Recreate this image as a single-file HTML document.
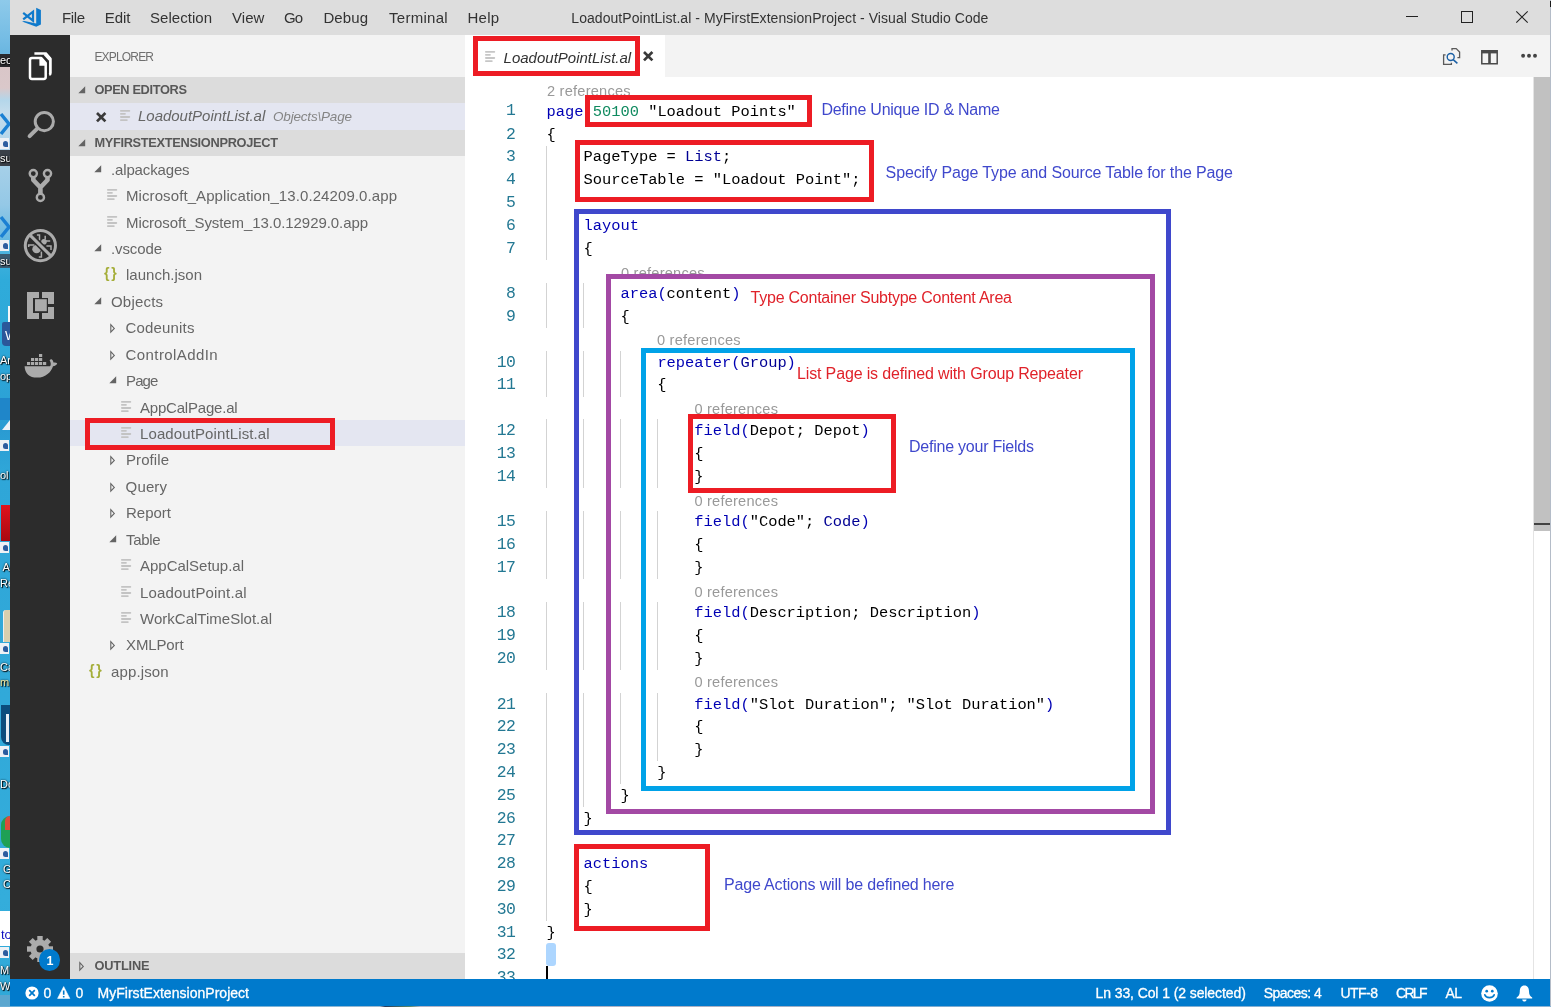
<!DOCTYPE html>
<html lang="en"><head><meta charset="utf-8"><title>LoadoutPointList.al - MyFirstExtensionProject - Visual Studio Code</title>
<style>
*{margin:0;padding:0;box-sizing:border-box}
html,body{width:1551px;height:1007px;overflow:hidden;background:#fff}
body{position:relative;will-change:transform;font-family:"Liberation Sans",sans-serif}
.t{position:absolute;white-space:pre;line-height:20px;height:20px}
.r{position:absolute}
.c{position:absolute;white-space:pre;line-height:20px;height:20px;font-family:"Liberation Mono",monospace;font-size:15.4px;letter-spacing:-0.005px;color:#000;left:546.60px}
.k{color:#0000b4}.v{color:#000094}.n{color:#0f8a5f}
.ln{position:absolute;white-space:pre;line-height:20px;height:20px;font-family:"Liberation Mono",monospace;font-size:16.4px;letter-spacing:-0.605px;color:#237893;text-align:right;width:60px;left:455.30px}
.g{position:absolute;width:1px;background:#d3d3d3}
svg{position:absolute;overflow:visible}
</style></head>
<body>
<div class="r" style="left:0px;top:0px;width:1551px;height:1007px;background:#2d9fd3;"></div>
<div class="r" style="left:0;top:0;width:10px;height:1007px;overflow:hidden;background:linear-gradient(180deg,#8ecaea 0,#74bce4 40px,#6ab6e0 53px,#d9c6c8 66px,#dac8ca 88px,#b4d6ea 100px,#c4dcec 112px,#b0d4ea 150px,#a4cfe8 170px,#94c8e6 205px,#6cbbe2 235px,#3cafdc 262px,#2fabda 280px,#2ea9d9 330px,#2ca2d6 400px,#2a9bd2 430px,#2fa6d8 470px,#31a9d9 700px,#34addb 900px,#30a8d8 1007px)"><div class="r" style="left:0px;top:54px;width:10px;height:13px;background:#2a2a2e;"></div><div class="t" style="left:0px;top:50px;font-size:11px;color:#fff;text-shadow:0 0 2px #000,1px 1px 1px #000;">ec</div><svg style="left:0;top:112px" width="10" height="24" viewBox="0 0 10 24"><path d="M1 2 L9 12 L1 22" fill="none" stroke="#1b80d3" stroke-width="3.4"/></svg><svg style="left:0;top:215px" width="10" height="24" viewBox="0 0 10 24"><path d="M1 2 L9 12 L1 22" fill="none" stroke="#1b80d3" stroke-width="3.4"/></svg><div class="r" style="left:0;top:138px;width:9px;height:11px;background:#eef1f5"></div><div class="r" style="left:3px;top:141px;width:5px;height:6px;background:#2c5d9f;border-radius:3px 3px 0 3px"></div><div class="r" style="left:0px;top:150px;width:10px;height:16px;background:#3a4048;"></div><div class="t" style="left:0px;top:148px;font-size:11px;color:#fff;text-shadow:0 0 2px #000,1px 1px 1px #000;">su</div><div class="r" style="left:0;top:240px;width:9px;height:11px;background:#eef1f5"></div><div class="r" style="left:3px;top:243px;width:5px;height:6px;background:#2c5d9f;border-radius:3px 3px 0 3px"></div><div class="r" style="left:0px;top:254px;width:10px;height:14px;background:#3a5a70;"></div><div class="t" style="left:0px;top:251px;font-size:11px;color:#fff;text-shadow:0 0 2px #000,1px 1px 1px #000;">su</div><div class="r" style="left:8px;top:306px;width:2px;height:24px;background:#f4f6f8;"></div><div class="r" style="left:2px;top:322px;width:8px;height:24px;background:#2b579a;border-radius:2px 0 0 4px"></div><div class="t" style="left:5px;top:326px;font-size:13px;color:#fff;">W</div><div class="t" style="left:0px;top:350px;font-size:11px;color:#fff;text-shadow:0 0 2px #000,1px 1px 1px #000;">An</div><div class="t" style="left:0px;top:366px;font-size:11px;color:#fff;text-shadow:0 0 2px #000,1px 1px 1px #000;">op</div><div class="r" style="left:0px;top:398px;width:10px;height:22px;background:#1f86c9;"></div><svg style="left:2px;top:420px" width="8" height="10" viewBox="0 0 8 10"><path d="M8 0 V10 H0 Z" fill="#eef3f8"/></svg><div class="r" style="left:0;top:440px;width:9px;height:11px;background:#eef1f5"></div><div class="r" style="left:3px;top:443px;width:5px;height:6px;background:#2c5d9f;border-radius:3px 3px 0 3px"></div><div class="t" style="left:0px;top:465px;font-size:11px;color:#fff;text-shadow:0 0 2px #000,1px 1px 1px #000;">ol</div><div class="r" style="left:1px;top:505px;width:9px;height:36px;background:linear-gradient(180deg,#e0121c,#a80810);"></div><div class="r" style="left:0;top:542px;width:9px;height:11px;background:#eef1f5"></div><div class="r" style="left:3px;top:545px;width:5px;height:6px;background:#2c5d9f;border-radius:3px 3px 0 3px"></div><div class="t" style="left:0px;top:557px;font-size:11px;color:#fff;text-shadow:0 0 2px #000,1px 1px 1px #000;"> A</div><div class="t" style="left:0px;top:573px;font-size:11px;color:#fff;text-shadow:0 0 2px #000,1px 1px 1px #000;">Re</div><div class="r" style="left:3px;top:610px;width:7px;height:32px;background:#d9cfae;border-radius:3px 0 0 0;border-left:1px solid #eee"></div><div class="r" style="left:0;top:643px;width:9px;height:11px;background:#eef1f5"></div><div class="r" style="left:3px;top:646px;width:5px;height:6px;background:#2c5d9f;border-radius:3px 3px 0 3px"></div><div class="t" style="left:0px;top:657px;font-size:11px;color:#fff;text-shadow:0 0 2px #000,1px 1px 1px #000;">Ca</div><div class="t" style="left:0px;top:672px;font-size:11px;color:#f4e9a0;text-shadow:0 0 2px #000,1px 1px 1px #000;">m</div><div class="r" style="left:1px;top:705px;width:9px;height:40px;background:#0b4c7c;border-radius:0 0 0 8px"></div><div class="r" style="left:6px;top:714px;width:3px;height:28px;background:#e8eef4;"></div><div class="r" style="left:0;top:746px;width:9px;height:11px;background:#eef1f5"></div><div class="r" style="left:3px;top:749px;width:5px;height:6px;background:#2c5d9f;border-radius:3px 3px 0 3px"></div><div class="t" style="left:0px;top:774px;font-size:11px;color:#fff;text-shadow:0 0 2px #000,1px 1px 1px #000;">Do</div><div class="r" style="left:1px;top:816px;width:9px;height:32px;background:#1fa055;border-radius:14px 0 0 14px"></div><div class="r" style="left:5px;top:816px;width:5px;height:14px;background:#dc4a3c;border-radius:8px 0 0 0"></div><div class="r" style="left:0;top:848px;width:9px;height:11px;background:#eef1f5"></div><div class="r" style="left:3px;top:851px;width:5px;height:6px;background:#2c5d9f;border-radius:3px 3px 0 3px"></div><div class="t" style="left:0px;top:859px;font-size:11px;color:#fff;text-shadow:0 0 2px #000,1px 1px 1px #000;"> G</div><div class="t" style="left:0px;top:874px;font-size:11px;color:#fff;text-shadow:0 0 2px #000,1px 1px 1px #000;"> C</div><div class="r" style="left:0px;top:911px;width:10px;height:35px;background:#ffffff;"></div><div class="t" style="left:1px;top:925px;font-size:13px;color:#1010c0;">to</div><div class="r" style="left:0;top:947px;width:9px;height:11px;background:#eef1f5"></div><div class="r" style="left:3px;top:950px;width:5px;height:6px;background:#2c5d9f;border-radius:3px 3px 0 3px"></div><div class="t" style="left:0px;top:960px;font-size:11px;color:#fff;text-shadow:0 0 2px #000,1px 1px 1px #000;">Mi</div><div class="t" style="left:0px;top:976px;font-size:11px;color:#fff;text-shadow:0 0 2px #000,1px 1px 1px #000;">W</div><div class="r" style="left:0px;top:995px;width:10px;height:12px;background:#5aa6cf;"></div></div>
<div class="r" style="left:1550px;top:0px;width:1px;height:1007px;background:#b4bcc8;"></div>
<div class="r" style="left:1550px;top:1px;width:1px;height:6px;background:#1a1a1a;"></div>
<div class="r" style="left:0px;top:1006px;width:1551px;height:1px;background:linear-gradient(90deg,#6aaed6 0,#7db4d8 300px,#9db9d0 380px,#2a3a5a 385px,#5a8a6a 410px,#b0b4c8 420px,#a8b0c4 760px,#7aaad0 900px,#8ab4d6 1551px);"></div>
<div class="r" style="left:10px;top:0px;width:1540px;height:1006px;background:#ffffff;"></div>
<div class="r" style="left:10px;top:0px;width:1540px;height:35px;background:#dddddd;"></div>
<div class="t" style="left:62.00px;top:8.00px;font-size:15px;color:#333333;letter-spacing:-0.388px;">File</div>
<div class="t" style="left:104.70px;top:8.00px;font-size:15px;color:#333333;letter-spacing:-0.048px;">Edit</div>
<div class="t" style="left:150.00px;top:8.00px;font-size:15px;color:#333333;letter-spacing:0.036px;">Selection</div>
<div class="t" style="left:232.00px;top:8.00px;font-size:15px;color:#333333;letter-spacing:0.040px;">View</div>
<div class="t" style="left:284.00px;top:8.00px;font-size:15px;color:#333333;letter-spacing:-1.010px;">Go</div>
<div class="t" style="left:323.40px;top:8.00px;font-size:15px;color:#333333;letter-spacing:0.099px;">Debug</div>
<div class="t" style="left:389.00px;top:8.00px;font-size:15px;color:#333333;letter-spacing:0.274px;">Terminal</div>
<div class="t" style="left:467.60px;top:8.00px;font-size:15px;color:#333333;letter-spacing:0.182px;">Help</div>
<div class="t" style="left:571.30px;top:8.00px;font-size:14px;color:#333333;letter-spacing:0.052px;">LoadoutPointList.al - MyFirstExtensionProject - Visual Studio Code</div>
<svg style="left:22px;top:7px" width="20" height="21" viewBox="0 0 20 21"><path fill="#0f7acc" d="M14.2 0.8 L18.9 3 V17.6 L14.2 19.8 L0 14.6 L2.4 13.9 L14.2 16.6 Z"/><path fill="none" stroke="#0f7acc" stroke-width="2.2" d="M1.2 5.8 L11 13.7 V4.7 L1.2 12.4"/></svg>
<div class="r" style="left:1406px;top:16px;width:12px;height:1px;background:#222;"></div>
<div class="r" style="left:1461px;top:11px;width:12px;height:12px;border:1px solid #222"></div>
<svg style="left:1516px;top:11px" width="12" height="12" viewBox="0 0 12 12"><path d="M0.3 0.3 L11.7 11.7 M11.7 0.3 L0.3 11.7" stroke="#222" stroke-width="1.1" fill="none"/></svg>
<div class="r" style="left:10px;top:35px;width:60px;height:944px;background:#2c2c2c;"></div>
<svg style="left:15px;top:44px" width="52" height="46" viewBox="0 0 52 46"><g fill="none" stroke="#fff" stroke-linejoin="round"><path d="M19.4 9.5 H30.6 L35.4 15 V29 Q35.4 30.4 34.2 30.8" stroke-width="2.7"/><path d="M30 9.8 L35 15.4" stroke-width="3.6"/><path d="M15 16 Q15 14.05 17 14.05 H26.3 L30.7 19 V33 Q30.7 34.9 28.7 34.9 H17 Q15 34.9 15 33 Z" stroke-width="2.5"/></g><path d="M24.4 14 H26.6 L30.8 19 V21.8 H24.4 Z" fill="#fff"/></svg>
<svg style="left:24px;top:108px" width="34" height="34" viewBox="0 0 34 34"><circle cx="20.3" cy="13.6" r="9.1" fill="none" stroke="#ababab" stroke-width="3"/><path d="M13.2 20.6 L5.6 28.2" stroke="#ababab" stroke-width="4" stroke-linecap="round"/></svg>
<svg style="left:26px;top:166px" width="30" height="38" viewBox="0 0 30 38"><g fill="none" stroke="#ababab"><circle cx="7.3" cy="7.6" r="3.6" stroke-width="2.4"/><circle cx="21.5" cy="7.6" r="3.6" stroke-width="2.4"/><circle cx="14.4" cy="31.4" r="3.6" stroke-width="2.4"/><path d="M7.3 11.5 V14 L14.4 21.5 V27.5 M21.5 11.5 V14 L14.4 21.5" stroke-width="4.6" stroke-linejoin="round"/></g></svg>
<svg style="left:15px;top:222px" width="52" height="46" viewBox="0 0 52 46"><g fill="none" stroke="#ababab" stroke-width="1.5"><path d="M21.9 13 H24.5 V18.6 M30.2 13.7 V17.6 M31 18.9 H35.2 M31.4 24.1 H36 V27.9 M19.4 23.1 H13.7 V24.9 M26.4 29.6 V35 H23.8"/></g><ellipse cx="21.6" cy="27.2" rx="4.3" ry="4.1" fill="#ababab"/><circle cx="29" cy="19.8" r="2.8" fill="#ababab"/><path d="M24 24.6 L27.4 21.4" stroke="#ababab" stroke-width="3"/><path d="M15 13.1 L35.8 33.9" stroke="#2c2c2c" stroke-width="6.2"/><path d="M15 13.1 L35.8 33.9" stroke="#ababab" stroke-width="3"/><circle cx="25.37" cy="23.54" r="15.1" fill="none" stroke="#ababab" stroke-width="3"/></svg>
<svg style="left:27px;top:292px" width="27" height="27" viewBox="0 0 27 27"><path fill="#ababab" d="M0 0 H12 V6 H6 V21 H12 V27 H0 Z M15 0 H27 V12 H21 V6 H15 Z M21 15 H27 V27 H15 V21 H21 Z"/><rect x="8" y="7.2" width="11.8" height="12" fill="#ababab"/></svg>
<svg style="left:24px;top:353px" width="34" height="26" viewBox="0 0 34 26"><g fill="#ababab"><path d="M0.6 13.2 H26 C27.2 12 27 9.5 25.6 7.2 C26.2 6.3 27 6 27.6 6.2 C28.8 7.2 29.4 8.4 29.4 9.6 C30.8 9.2 32.2 9.4 33.2 10.2 C32.8 12 31 13 29 13.2 C27 19 22 24.6 13 24.6 C5.5 24.6 0.8 20.5 0.6 13.2 Z"/><rect x="3" y="9" width="3.2" height="3"/><rect x="7" y="9" width="3.2" height="3"/><rect x="11" y="9" width="3.2" height="3"/><rect x="15" y="9" width="3.2" height="3"/><rect x="19" y="9" width="3.2" height="3"/><rect x="7" y="5" width="3.2" height="3"/><rect x="11" y="5" width="3.2" height="3"/><rect x="15" y="5" width="3.2" height="3"/><rect x="15" y="1" width="3.2" height="3"/></g></svg>
<svg style="left:26.4px;top:935.2px" width="28" height="28" viewBox="0 0 28 28"><g transform="translate(14 14)"><circle r="6.6" fill="none" stroke="#ababab" stroke-width="6"/><g fill="#ababab"><rect x="-2.7" y="-13" width="5.4" height="5" transform="rotate(0)"/><rect x="-2.7" y="-13" width="5.4" height="5" transform="rotate(45)"/><rect x="-2.7" y="-13" width="5.4" height="5" transform="rotate(90)"/><rect x="-2.7" y="-13" width="5.4" height="5" transform="rotate(135)"/><rect x="-2.7" y="-13" width="5.4" height="5" transform="rotate(180)"/><rect x="-2.7" y="-13" width="5.4" height="5" transform="rotate(225)"/><rect x="-2.7" y="-13" width="5.4" height="5" transform="rotate(270)"/><rect x="-2.7" y="-13" width="5.4" height="5" transform="rotate(315)"/></g></g></svg>
<div class="r" style="left:38.8px;top:949.4px;width:21.2px;height:21.2px;border-radius:50%;background:#007acc"></div>
<div class="t" style="left:46.40px;top:951.00px;font-size:12.5px;color:#fff;font-weight:bold;">1</div>
<div class="r" style="left:70px;top:35px;width:395px;height:944px;background:#f3f3f3;"></div>
<div class="t" style="left:94.40px;top:47.00px;font-size:12px;color:#6f6f6f;letter-spacing:-0.822px;">EXPLORER</div>
<div class="r" style="left:70px;top:77px;width:395px;height:26px;background:#dcdcdc;"></div>
<svg style="left:77.8px;top:85.8px" width="8" height="8" viewBox="0 0 8 8"><path d="M7.2 0.3 V7.2 H0.3 Z" fill="#646464"/></svg>
<div class="t" style="left:94.40px;top:80.00px;font-size:12.8px;color:#585858;letter-spacing:-0.354px;font-weight:bold;">OPEN EDITORS</div>
<div class="r" style="left:70px;top:103px;width:395px;height:27px;background:#e4e6f1;"></div>
<svg style="left:95.5px;top:111.8px" width="10.4" height="10.4" viewBox="-5.2 -5.2 10.4 10.4"><path d="M-4.2 -4.2 L4.2 4.2 M4.2 -4.2 L-4.2 4.2" stroke="#3a3a3a" stroke-width="2.7" fill="none"/></svg>
<svg style="left:119.6px;top:110.2px" width="11" height="12" viewBox="0 0 11 12"><rect x="0" y="0.00" width="10.2" height="1.8" rx="0.8" fill="#c3c3c3"/><rect x="0" y="3.05" width="5.8" height="1.8" rx="0.8" fill="#c3c3c3"/><rect x="0" y="6.10" width="10.2" height="1.8" rx="0.8" fill="#c3c3c3"/><rect x="0" y="9.15" width="7.7" height="1.8" rx="0.8" fill="#c3c3c3"/></svg>
<div class="t" style="left:138.00px;top:106.40px;font-size:15px;color:#666666;letter-spacing:-0.019px;font-style:italic;">LoadoutPointList.al</div>
<div class="t" style="left:273.00px;top:107.40px;font-size:13.5px;color:#858585;letter-spacing:-0.185px;font-style:italic;">Objects\Page</div>
<div class="r" style="left:70px;top:130px;width:395px;height:26px;background:#dcdcdc;"></div>
<svg style="left:77.8px;top:139.0px" width="8" height="8" viewBox="0 0 8 8"><path d="M7.2 0.3 V7.2 H0.3 Z" fill="#646464"/></svg>
<div class="t" style="left:94.40px;top:133.00px;font-size:12.8px;color:#585858;letter-spacing:-0.318px;font-weight:bold;">MYFIRSTEXTENSIONPROJECT</div>
<div class="r" style="left:70px;top:420px;width:395px;height:26px;background:#e4e6f1;"></div>
<svg style="left:94.1px;top:165.0px" width="8" height="8" viewBox="0 0 8 8"><path d="M7.2 0.3 V7.2 H0.3 Z" fill="#646464"/></svg>
<div class="t" style="left:111.00px;top:159.80px;font-size:15px;color:#666666;letter-spacing:-0.145px;">.alpackages</div>
<svg style="left:107.2px;top:189.4px" width="11" height="12" viewBox="0 0 11 12"><rect x="0" y="0.00" width="10.2" height="1.8" rx="0.8" fill="#c3c3c3"/><rect x="0" y="3.05" width="5.8" height="1.8" rx="0.8" fill="#c3c3c3"/><rect x="0" y="6.10" width="10.2" height="1.8" rx="0.8" fill="#c3c3c3"/><rect x="0" y="9.15" width="7.7" height="1.8" rx="0.8" fill="#c3c3c3"/></svg>
<div class="t" style="left:126.00px;top:186.22px;font-size:15px;color:#666666;letter-spacing:0.089px;">Microsoft_Application_13.0.24209.0.app</div>
<svg style="left:107.2px;top:215.8px" width="11" height="12" viewBox="0 0 11 12"><rect x="0" y="0.00" width="10.2" height="1.8" rx="0.8" fill="#c3c3c3"/><rect x="0" y="3.05" width="5.8" height="1.8" rx="0.8" fill="#c3c3c3"/><rect x="0" y="6.10" width="10.2" height="1.8" rx="0.8" fill="#c3c3c3"/><rect x="0" y="9.15" width="7.7" height="1.8" rx="0.8" fill="#c3c3c3"/></svg>
<div class="t" style="left:126.00px;top:212.64px;font-size:15px;color:#666666;letter-spacing:-0.072px;">Microsoft_System_13.0.12929.0.app</div>
<svg style="left:94.1px;top:244.3px" width="8" height="8" viewBox="0 0 8 8"><path d="M7.2 0.3 V7.2 H0.3 Z" fill="#646464"/></svg>
<div class="t" style="left:111.00px;top:239.06px;font-size:15px;color:#666666;letter-spacing:-0.115px;">.vscode</div>
<div class="t" style="left:104.10px;top:263.28px;font-size:14.2px;color:#a5ae3a;letter-spacing:1.552px;font-weight:bold;">{}</div>
<div class="t" style="left:126.00px;top:265.48px;font-size:15px;color:#666666;letter-spacing:0.012px;">launch.json</div>
<svg style="left:94.1px;top:297.1px" width="8" height="8" viewBox="0 0 8 8"><path d="M7.2 0.3 V7.2 H0.3 Z" fill="#646464"/></svg>
<div class="t" style="left:111.00px;top:291.90px;font-size:15px;color:#666666;letter-spacing:0.192px;">Objects</div>
<svg style="left:109.8px;top:323.1px" width="7" height="11" viewBox="0 0 7 11"><path d="M0.8 1.7 L4.3 5.4 L0.8 9.1 Z" fill="none" stroke="#646464" stroke-width="1.1" stroke-linejoin="miter"/></svg>
<div class="t" style="left:125.60px;top:318.32px;font-size:15px;color:#666666;letter-spacing:0.157px;">Codeunits</div>
<svg style="left:109.8px;top:349.5px" width="7" height="11" viewBox="0 0 7 11"><path d="M0.8 1.7 L4.3 5.4 L0.8 9.1 Z" fill="none" stroke="#646464" stroke-width="1.1" stroke-linejoin="miter"/></svg>
<div class="t" style="left:125.60px;top:344.74px;font-size:15px;color:#666666;letter-spacing:0.404px;">ControlAddIn</div>
<svg style="left:109.1px;top:376.4px" width="8" height="8" viewBox="0 0 8 8"><path d="M7.2 0.3 V7.2 H0.3 Z" fill="#646464"/></svg>
<div class="t" style="left:126.00px;top:371.16px;font-size:15px;color:#666666;letter-spacing:-0.875px;">Page</div>
<svg style="left:121.2px;top:400.8px" width="11" height="12" viewBox="0 0 11 12"><rect x="0" y="0.00" width="10.2" height="1.8" rx="0.8" fill="#c3c3c3"/><rect x="0" y="3.05" width="5.8" height="1.8" rx="0.8" fill="#c3c3c3"/><rect x="0" y="6.10" width="10.2" height="1.8" rx="0.8" fill="#c3c3c3"/><rect x="0" y="9.15" width="7.7" height="1.8" rx="0.8" fill="#c3c3c3"/></svg>
<div class="t" style="left:140.00px;top:397.58px;font-size:15px;color:#666666;letter-spacing:-0.205px;">AppCalPage.al</div>
<svg style="left:121.2px;top:427.2px" width="11" height="12" viewBox="0 0 11 12"><rect x="0" y="0.00" width="10.2" height="1.8" rx="0.8" fill="#c3c3c3"/><rect x="0" y="3.05" width="5.8" height="1.8" rx="0.8" fill="#c3c3c3"/><rect x="0" y="6.10" width="10.2" height="1.8" rx="0.8" fill="#c3c3c3"/><rect x="0" y="9.15" width="7.7" height="1.8" rx="0.8" fill="#c3c3c3"/></svg>
<div class="t" style="left:140.00px;top:424.00px;font-size:15px;color:#666666;letter-spacing:0.112px;">LoadoutPointList.al</div>
<svg style="left:109.8px;top:455.2px" width="7" height="11" viewBox="0 0 7 11"><path d="M0.8 1.7 L4.3 5.4 L0.8 9.1 Z" fill="none" stroke="#646464" stroke-width="1.1" stroke-linejoin="miter"/></svg>
<div class="t" style="left:126.00px;top:450.42px;font-size:15px;color:#666666;letter-spacing:0.079px;">Profile</div>
<svg style="left:109.8px;top:481.6px" width="7" height="11" viewBox="0 0 7 11"><path d="M0.8 1.7 L4.3 5.4 L0.8 9.1 Z" fill="none" stroke="#646464" stroke-width="1.1" stroke-linejoin="miter"/></svg>
<div class="t" style="left:125.60px;top:476.84px;font-size:15px;color:#666666;letter-spacing:0.139px;">Query</div>
<svg style="left:109.8px;top:508.1px" width="7" height="11" viewBox="0 0 7 11"><path d="M0.8 1.7 L4.3 5.4 L0.8 9.1 Z" fill="none" stroke="#646464" stroke-width="1.1" stroke-linejoin="miter"/></svg>
<div class="t" style="left:126.00px;top:503.26px;font-size:15px;color:#666666;">Report</div>
<svg style="left:109.1px;top:534.9px" width="8" height="8" viewBox="0 0 8 8"><path d="M7.2 0.3 V7.2 H0.3 Z" fill="#646464"/></svg>
<div class="t" style="left:126.00px;top:529.68px;font-size:15px;color:#666666;letter-spacing:-0.316px;">Table</div>
<svg style="left:121.2px;top:559.3px" width="11" height="12" viewBox="0 0 11 12"><rect x="0" y="0.00" width="10.2" height="1.8" rx="0.8" fill="#c3c3c3"/><rect x="0" y="3.05" width="5.8" height="1.8" rx="0.8" fill="#c3c3c3"/><rect x="0" y="6.10" width="10.2" height="1.8" rx="0.8" fill="#c3c3c3"/><rect x="0" y="9.15" width="7.7" height="1.8" rx="0.8" fill="#c3c3c3"/></svg>
<div class="t" style="left:140.00px;top:556.10px;font-size:15px;color:#666666;letter-spacing:-0.018px;">AppCalSetup.al</div>
<svg style="left:121.2px;top:585.7px" width="11" height="12" viewBox="0 0 11 12"><rect x="0" y="0.00" width="10.2" height="1.8" rx="0.8" fill="#c3c3c3"/><rect x="0" y="3.05" width="5.8" height="1.8" rx="0.8" fill="#c3c3c3"/><rect x="0" y="6.10" width="10.2" height="1.8" rx="0.8" fill="#c3c3c3"/><rect x="0" y="9.15" width="7.7" height="1.8" rx="0.8" fill="#c3c3c3"/></svg>
<div class="t" style="left:140.00px;top:582.52px;font-size:15px;color:#666666;letter-spacing:0.168px;">LoadoutPoint.al</div>
<svg style="left:121.2px;top:612.1px" width="11" height="12" viewBox="0 0 11 12"><rect x="0" y="0.00" width="10.2" height="1.8" rx="0.8" fill="#c3c3c3"/><rect x="0" y="3.05" width="5.8" height="1.8" rx="0.8" fill="#c3c3c3"/><rect x="0" y="6.10" width="10.2" height="1.8" rx="0.8" fill="#c3c3c3"/><rect x="0" y="9.15" width="7.7" height="1.8" rx="0.8" fill="#c3c3c3"/></svg>
<div class="t" style="left:140.00px;top:608.94px;font-size:15px;color:#666666;letter-spacing:0.018px;">WorkCalTimeSlot.al</div>
<svg style="left:109.8px;top:640.2px" width="7" height="11" viewBox="0 0 7 11"><path d="M0.8 1.7 L4.3 5.4 L0.8 9.1 Z" fill="none" stroke="#646464" stroke-width="1.1" stroke-linejoin="miter"/></svg>
<div class="t" style="left:126.00px;top:635.36px;font-size:15px;color:#666666;letter-spacing:-0.125px;">XMLPort</div>
<div class="t" style="left:89.10px;top:659.58px;font-size:14.2px;color:#a5ae3a;letter-spacing:1.552px;font-weight:bold;">{}</div>
<div class="t" style="left:111.00px;top:661.78px;font-size:15px;color:#666666;letter-spacing:0.126px;">app.json</div>
<div class="r" style="left:70px;top:953px;width:395px;height:26px;background:#dcdcdc;"></div>
<svg style="left:79.0px;top:961.2px" width="7" height="11" viewBox="0 0 7 11"><path d="M0.8 1.7 L4.3 5.4 L0.8 9.1 Z" fill="none" stroke="#646464" stroke-width="1.1" stroke-linejoin="miter"/></svg>
<div class="t" style="left:94.40px;top:956.00px;font-size:12.8px;color:#585858;letter-spacing:-0.163px;font-weight:bold;">OUTLINE</div>
<div class="r" style="left:85px;top:418px;width:250px;height:32px;border:5px solid #ed1c24;box-sizing:border-box"></div>
<div class="r" style="left:465px;top:35px;width:1085px;height:42px;background:#f3f3f3;"></div>
<div class="r" style="left:465px;top:35px;width:200px;height:42px;background:#ffffff;"></div>
<svg style="left:485.0px;top:51.0px" width="11" height="12" viewBox="0 0 11 12"><rect x="0" y="0.00" width="10.2" height="1.8" rx="0.8" fill="#c6c6c6"/><rect x="0" y="3.05" width="5.8" height="1.8" rx="0.8" fill="#c6c6c6"/><rect x="0" y="6.10" width="10.2" height="1.8" rx="0.8" fill="#c6c6c6"/><rect x="0" y="9.15" width="7.7" height="1.8" rx="0.8" fill="#c6c6c6"/></svg>
<div class="t" style="left:503.60px;top:48.00px;font-size:15px;color:#333333;font-style:italic;">LoadoutPointList.al</div>
<svg style="left:643.4px;top:51.4px" width="10.4" height="10.4" viewBox="-5.2 -5.2 10.4 10.4"><path d="M-4.2 -4.2 L4.2 4.2 M4.2 -4.2 L-4.2 4.2" stroke="#3a3a3a" stroke-width="2.7" fill="none"/></svg>
<svg style="left:1442px;top:47px" width="20" height="19" viewBox="0 0 20 19"><g fill="none" stroke-width="1.3"><path d="M10 3.4 V1.6 H14.2 L17.6 5 V10.6 H15.4" stroke="#5a5a5a"/><path d="M3.6 7.8 H1.6 V17.4 H9.4 V15.8" stroke="#5a5a5a"/><circle cx="8.7" cy="10" r="3.5" stroke="#1a5fa4" stroke-width="1.4"/><path d="M11.2 12.6 L15.4 16.4" stroke="#1a5fa4" stroke-width="1.5"/></g></svg>
<svg style="left:1481px;top:49.8px" width="18" height="16" viewBox="0 0 18 16"><path d="M0.8 0.8 H16.2 V13.8 H0.8 Z" fill="none" stroke="#4a4a4a" stroke-width="1.5"/><rect x="0.8" y="0.8" width="15.4" height="2.6" fill="#4a4a4a"/><rect x="7.2" y="1" width="2.6" height="12.8" fill="#4a4a4a"/></svg>
<svg style="left:1519px;top:52px" width="20" height="8" viewBox="0 0 20 8"><circle cx="4.1" cy="3.8" r="1.95" fill="#424242"/><circle cx="10" cy="3.8" r="1.95" fill="#424242"/><circle cx="16" cy="3.8" r="1.95" fill="#424242"/></svg>
<div class="r" style="left:465px;top:77px;width:1068.5px;height:902px;overflow:hidden;background:#fff">
<div class="t" style="left:82.00px;top:4.00px;font-size:14.6px;color:#999999;letter-spacing:0.222px;">2 references</div>
<div class="ln" style="left:-9.70px;top:23.80px">1</div>
<div class="c" style="left:81.60px;top:24.80px"><span class="k">page</span> <span class="n">50100</span> "Loadout Points"</div>
<div class="ln" style="left:-9.70px;top:47.60px">2</div>
<div class="c" style="left:81.60px;top:47.60px">{</div>
<div class="ln" style="left:-9.70px;top:70.40px">3</div>
<div class="g" style="left:81.0px;top:68.8px;height:22.8px"></div>
<div class="c" style="left:81.60px;top:70.40px">    PageType = <span class="v">List</span>;</div>
<div class="ln" style="left:-9.70px;top:93.20px">4</div>
<div class="g" style="left:81.0px;top:91.6px;height:22.8px"></div>
<div class="c" style="left:81.60px;top:93.20px">    SourceTable = "Loadout Point";</div>
<div class="ln" style="left:-9.70px;top:116.00px">5</div>
<div class="g" style="left:81.0px;top:114.4px;height:22.8px"></div>
<div class="ln" style="left:-9.70px;top:138.80px">6</div>
<div class="g" style="left:81.0px;top:137.2px;height:22.8px"></div>
<div class="c" style="left:81.60px;top:138.80px">    <span class="k">layout</span></div>
<div class="ln" style="left:-9.70px;top:161.60px">7</div>
<div class="g" style="left:81.0px;top:160.0px;height:22.8px"></div>
<div class="c" style="left:81.60px;top:161.60px">    {</div>
<div class="t" style="left:156.00px;top:186.00px;font-size:14.6px;color:#999999;letter-spacing:0.222px;">0 references</div>
<div class="ln" style="left:-9.70px;top:207.20px">8</div>
<div class="g" style="left:81.0px;top:205.6px;height:22.8px"></div>
<div class="g" style="left:118.0px;top:205.6px;height:22.8px"></div>
<div class="c" style="left:81.60px;top:207.20px">        <span class="k">area(</span>content<span class="k">)</span></div>
<div class="ln" style="left:-9.70px;top:230.00px">9</div>
<div class="g" style="left:81.0px;top:228.4px;height:22.8px"></div>
<div class="g" style="left:118.0px;top:228.4px;height:22.8px"></div>
<div class="c" style="left:81.60px;top:230.00px">        {</div>
<div class="t" style="left:192.00px;top:253.00px;font-size:14.6px;color:#999999;letter-spacing:0.222px;">0 references</div>
<div class="ln" style="left:-9.70px;top:275.60px">10</div>
<div class="g" style="left:81.0px;top:274.0px;height:22.8px"></div>
<div class="g" style="left:118.0px;top:274.0px;height:22.8px"></div>
<div class="g" style="left:155.0px;top:274.0px;height:22.8px"></div>
<div class="c" style="left:81.60px;top:275.60px">            <span class="k">repeater(</span><span class="v">Group</span><span class="k">)</span></div>
<div class="ln" style="left:-9.70px;top:298.40px">11</div>
<div class="g" style="left:81.0px;top:296.8px;height:22.8px"></div>
<div class="g" style="left:118.0px;top:296.8px;height:22.8px"></div>
<div class="g" style="left:155.0px;top:296.8px;height:22.8px"></div>
<div class="c" style="left:81.60px;top:298.40px">            {</div>
<div class="t" style="left:229.40px;top:322.00px;font-size:14.6px;color:#999999;letter-spacing:0.222px;">0 references</div>
<div class="ln" style="left:-9.70px;top:344.00px">12</div>
<div class="g" style="left:81.0px;top:342.4px;height:22.8px"></div>
<div class="g" style="left:118.0px;top:342.4px;height:22.8px"></div>
<div class="g" style="left:155.0px;top:342.4px;height:22.8px"></div>
<div class="g" style="left:192.0px;top:342.4px;height:22.8px"></div>
<div class="c" style="left:81.60px;top:344.00px">                <span class="k">field(</span>Depot; Depot<span class="k">)</span></div>
<div class="ln" style="left:-9.70px;top:366.80px">13</div>
<div class="g" style="left:81.0px;top:365.2px;height:22.8px"></div>
<div class="g" style="left:118.0px;top:365.2px;height:22.8px"></div>
<div class="g" style="left:155.0px;top:365.2px;height:22.8px"></div>
<div class="g" style="left:192.0px;top:365.2px;height:22.8px"></div>
<div class="c" style="left:81.60px;top:366.80px">                {</div>
<div class="ln" style="left:-9.70px;top:389.60px">14</div>
<div class="g" style="left:81.0px;top:388.0px;height:22.8px"></div>
<div class="g" style="left:118.0px;top:388.0px;height:22.8px"></div>
<div class="g" style="left:155.0px;top:388.0px;height:22.8px"></div>
<div class="g" style="left:192.0px;top:388.0px;height:22.8px"></div>
<div class="c" style="left:81.60px;top:389.60px">                }</div>
<div class="t" style="left:229.40px;top:414.00px;font-size:14.6px;color:#999999;letter-spacing:0.222px;">0 references</div>
<div class="ln" style="left:-9.70px;top:435.20px">15</div>
<div class="g" style="left:81.0px;top:433.6px;height:22.8px"></div>
<div class="g" style="left:118.0px;top:433.6px;height:22.8px"></div>
<div class="g" style="left:155.0px;top:433.6px;height:22.8px"></div>
<div class="g" style="left:192.0px;top:433.6px;height:22.8px"></div>
<div class="c" style="left:81.60px;top:435.20px">                <span class="k">field(</span>"Code"; <span class="v">Code</span><span class="k">)</span></div>
<div class="ln" style="left:-9.70px;top:458.00px">16</div>
<div class="g" style="left:81.0px;top:456.4px;height:22.8px"></div>
<div class="g" style="left:118.0px;top:456.4px;height:22.8px"></div>
<div class="g" style="left:155.0px;top:456.4px;height:22.8px"></div>
<div class="g" style="left:192.0px;top:456.4px;height:22.8px"></div>
<div class="c" style="left:81.60px;top:458.00px">                {</div>
<div class="ln" style="left:-9.70px;top:480.80px">17</div>
<div class="g" style="left:81.0px;top:479.2px;height:22.8px"></div>
<div class="g" style="left:118.0px;top:479.2px;height:22.8px"></div>
<div class="g" style="left:155.0px;top:479.2px;height:22.8px"></div>
<div class="g" style="left:192.0px;top:479.2px;height:22.8px"></div>
<div class="c" style="left:81.60px;top:480.80px">                }</div>
<div class="t" style="left:229.40px;top:505.00px;font-size:14.6px;color:#999999;letter-spacing:0.222px;">0 references</div>
<div class="ln" style="left:-9.70px;top:526.40px">18</div>
<div class="g" style="left:81.0px;top:524.8px;height:22.8px"></div>
<div class="g" style="left:118.0px;top:524.8px;height:22.8px"></div>
<div class="g" style="left:155.0px;top:524.8px;height:22.8px"></div>
<div class="g" style="left:192.0px;top:524.8px;height:22.8px"></div>
<div class="c" style="left:81.60px;top:526.40px">                <span class="k">field(</span>Description; Description<span class="k">)</span></div>
<div class="ln" style="left:-9.70px;top:549.20px">19</div>
<div class="g" style="left:81.0px;top:547.6px;height:22.8px"></div>
<div class="g" style="left:118.0px;top:547.6px;height:22.8px"></div>
<div class="g" style="left:155.0px;top:547.6px;height:22.8px"></div>
<div class="g" style="left:192.0px;top:547.6px;height:22.8px"></div>
<div class="c" style="left:81.60px;top:549.20px">                {</div>
<div class="ln" style="left:-9.70px;top:572.00px">20</div>
<div class="g" style="left:81.0px;top:570.4px;height:22.8px"></div>
<div class="g" style="left:118.0px;top:570.4px;height:22.8px"></div>
<div class="g" style="left:155.0px;top:570.4px;height:22.8px"></div>
<div class="g" style="left:192.0px;top:570.4px;height:22.8px"></div>
<div class="c" style="left:81.60px;top:572.00px">                }</div>
<div class="t" style="left:229.40px;top:595.00px;font-size:14.6px;color:#999999;letter-spacing:0.222px;">0 references</div>
<div class="ln" style="left:-9.70px;top:617.60px">21</div>
<div class="g" style="left:81.0px;top:616.0px;height:22.8px"></div>
<div class="g" style="left:118.0px;top:616.0px;height:22.8px"></div>
<div class="g" style="left:155.0px;top:616.0px;height:22.8px"></div>
<div class="g" style="left:192.0px;top:616.0px;height:22.8px"></div>
<div class="c" style="left:81.60px;top:617.60px">                <span class="k">field(</span>"Slot Duration"; "Slot Duration"<span class="k">)</span></div>
<div class="ln" style="left:-9.70px;top:640.40px">22</div>
<div class="g" style="left:81.0px;top:638.8px;height:22.8px"></div>
<div class="g" style="left:118.0px;top:638.8px;height:22.8px"></div>
<div class="g" style="left:155.0px;top:638.8px;height:22.8px"></div>
<div class="g" style="left:192.0px;top:638.8px;height:22.8px"></div>
<div class="c" style="left:81.60px;top:640.40px">                {</div>
<div class="ln" style="left:-9.70px;top:663.20px">23</div>
<div class="g" style="left:81.0px;top:661.6px;height:22.8px"></div>
<div class="g" style="left:118.0px;top:661.6px;height:22.8px"></div>
<div class="g" style="left:155.0px;top:661.6px;height:22.8px"></div>
<div class="g" style="left:192.0px;top:661.6px;height:22.8px"></div>
<div class="c" style="left:81.60px;top:663.20px">                }</div>
<div class="ln" style="left:-9.70px;top:686.00px">24</div>
<div class="g" style="left:81.0px;top:684.4px;height:22.8px"></div>
<div class="g" style="left:118.0px;top:684.4px;height:22.8px"></div>
<div class="g" style="left:155.0px;top:684.4px;height:22.8px"></div>
<div class="c" style="left:81.60px;top:686.00px">            }</div>
<div class="ln" style="left:-9.70px;top:708.80px">25</div>
<div class="g" style="left:81.0px;top:707.2px;height:22.8px"></div>
<div class="g" style="left:118.0px;top:707.2px;height:22.8px"></div>
<div class="c" style="left:81.60px;top:708.80px">        }</div>
<div class="ln" style="left:-9.70px;top:731.60px">26</div>
<div class="g" style="left:81.0px;top:730.0px;height:22.8px"></div>
<div class="c" style="left:81.60px;top:731.60px">    }</div>
<div class="ln" style="left:-9.70px;top:754.40px">27</div>
<div class="g" style="left:81.0px;top:752.8px;height:22.8px"></div>
<div class="ln" style="left:-9.70px;top:777.20px">28</div>
<div class="g" style="left:81.0px;top:775.6px;height:22.8px"></div>
<div class="c" style="left:81.60px;top:777.20px">    <span class="k">actions</span></div>
<div class="ln" style="left:-9.70px;top:800.00px">29</div>
<div class="g" style="left:81.0px;top:798.4px;height:22.8px"></div>
<div class="c" style="left:81.60px;top:800.00px">    {</div>
<div class="ln" style="left:-9.70px;top:822.80px">30</div>
<div class="g" style="left:81.0px;top:821.2px;height:22.8px"></div>
<div class="c" style="left:81.60px;top:822.80px">    }</div>
<div class="ln" style="left:-9.70px;top:845.60px">31</div>
<div class="c" style="left:81.60px;top:845.60px">}</div>
<div class="ln" style="left:-9.70px;top:868.40px">32</div>
<div class="ln" style="left:-9.70px;top:891.20px">33</div>
<div class="r" style="left:81.4px;top:866.4px;width:9.6px;height:22.4px;background:#add6ff;border-radius:3px"></div>
<div class="r" style="left:81px;top:889px;width:2px;height:13px;background:#000;"></div>
</div>
<div class="r" style="left:1533px;top:77px;width:1px;height:902px;background:#e4e4e4;"></div>
<div class="r" style="left:1533.5px;top:77px;width:16.5px;height:454px;background:#c1c1c1;"></div>
<div class="r" style="left:1534px;top:523px;width:16px;height:2px;background:#424242;"></div>
<div class="r" style="left:473px;top:36px;width:167px;height:40px;border:5px solid #ed1c24;box-sizing:border-box"></div>
<div class="r" style="left:585px;top:95px;width:227px;height:32px;border:5px solid #ed1c24;box-sizing:border-box"></div>
<div class="r" style="left:575px;top:140px;width:299px;height:62px;border:5px solid #ed1c24;box-sizing:border-box"></div>
<div class="r" style="left:574px;top:209px;width:597px;height:626px;border:5px solid #3f48cc;box-sizing:border-box"></div>
<div class="r" style="left:606px;top:274px;width:549px;height:540px;border:5px solid #a349a4;box-sizing:border-box"></div>
<div class="r" style="left:641px;top:348px;width:494px;height:443px;border:5px solid #00a2e8;box-sizing:border-box"></div>
<div class="r" style="left:688px;top:414px;width:208px;height:79px;border:5px solid #ed1c24;box-sizing:border-box"></div>
<div class="r" style="left:574px;top:844px;width:136px;height:87px;border:5px solid #ed1c24;box-sizing:border-box"></div>
<div class="t" style="left:821.40px;top:100.00px;font-size:16px;color:#3f48cc;letter-spacing:-0.249px;">Define Unique ID &amp; Name</div>
<div class="t" style="left:885.60px;top:163.00px;font-size:16px;color:#3f48cc;letter-spacing:-0.131px;">Specify Page Type and Source Table for the Page</div>
<div class="t" style="left:750.60px;top:288.00px;font-size:16px;color:#e0222a;letter-spacing:-0.239px;">Type Container Subtype Content Area</div>
<div class="t" style="left:797.00px;top:363.60px;font-size:16px;color:#e0222a;letter-spacing:-0.147px;">List Page is defined with Group Repeater</div>
<div class="t" style="left:909.00px;top:436.60px;font-size:16px;color:#3f48cc;letter-spacing:-0.232px;">Define your Fields</div>
<div class="t" style="left:724.00px;top:875.00px;font-size:16px;color:#3f48cc;letter-spacing:-0.166px;">Page Actions will be defined here</div>
<div class="r" style="left:10px;top:979px;width:1540px;height:27px;background:#007acc;"></div>
<svg style="left:24.5px;top:986px" width="14" height="14" viewBox="0 0 14 14"><circle cx="7" cy="7" r="6.6" fill="#fff"/><path d="M4.2 4.2 L9.8 9.8 M9.8 4.2 L4.2 9.8" stroke="#007acc" stroke-width="1.7"/></svg>
<div class="t" style="left:43.60px;top:983.00px;font-size:14px;color:#fff;-webkit-text-stroke:0.3px #fff;">0</div>
<svg style="left:57px;top:986px" width="14" height="13" viewBox="0 0 14 13"><path d="M6.7 0.6 L12.8 12.4 H0.6 Z" fill="#fff" stroke="#fff" stroke-width="0.6" stroke-linejoin="round"/><path d="M6.7 4.4 V8.8 M6.7 9.9 V11.4" stroke="#007acc" stroke-width="1.6"/></svg>
<div class="t" style="left:75.60px;top:983.00px;font-size:14px;color:#fff;-webkit-text-stroke:0.3px #fff;">0</div>
<div class="t" style="left:97.50px;top:983.00px;font-size:14px;color:#fff;letter-spacing:0.026px;-webkit-text-stroke:0.3px #fff;">MyFirstExtensionProject</div>
<div class="t" style="left:1095.50px;top:983.00px;font-size:14px;color:#fff;letter-spacing:-0.093px;-webkit-text-stroke:0.3px #fff;">Ln 33, Col 1 (2 selected)</div>
<div class="t" style="left:1263.80px;top:983.00px;font-size:14px;color:#fff;letter-spacing:-0.532px;-webkit-text-stroke:0.3px #fff;">Spaces: 4</div>
<div class="t" style="left:1340.40px;top:983.00px;font-size:14px;color:#fff;letter-spacing:-0.516px;-webkit-text-stroke:0.3px #fff;">UTF-8</div>
<div class="t" style="left:1396.00px;top:983.00px;font-size:14px;color:#fff;letter-spacing:-1.685px;-webkit-text-stroke:0.3px #fff;">CRLF</div>
<div class="t" style="left:1445.60px;top:983.00px;font-size:14px;color:#fff;letter-spacing:-0.722px;-webkit-text-stroke:0.3px #fff;">AL</div>
<svg style="left:1481px;top:984.5px" width="17" height="17" viewBox="0 0 17 17"><circle cx="8.5" cy="8.5" r="8.3" fill="#fff"/><circle cx="5.7" cy="6.2" r="1.35" fill="#007acc"/><circle cx="11.3" cy="6.2" r="1.35" fill="#007acc"/><path d="M3.8 9.8 C5 13.6 12 13.6 13.2 9.8" fill="none" stroke="#007acc" stroke-width="1.7" stroke-linecap="round"/></svg>
<svg style="left:1516px;top:985px" width="17" height="17" viewBox="0 0 17 17"><path d="M8.4 0.6 C11.6 0.6 13 3.2 13 6.2 C13 9.6 14.2 11.4 16.2 12.6 V13.4 H0.6 V12.6 C2.6 11.4 3.8 9.6 3.8 6.2 C3.8 3.2 5.2 0.6 8.4 0.6 Z" fill="#fff"/><path d="M6.2 14.6 H10.6 C10.4 16 9.4 16.6 8.4 16.6 C7.4 16.6 6.4 16 6.2 14.6 Z" fill="#fff"/></svg>
</body></html>
